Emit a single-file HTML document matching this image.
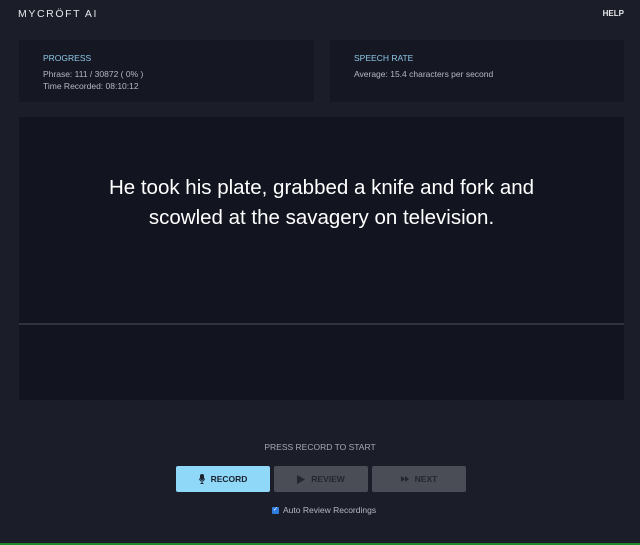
<!DOCTYPE html>
<html><head><meta charset="utf-8"><style>
html,body{margin:0;padding:0;width:640px;height:545px;overflow:hidden;background:#1b1e29;font-family:"Liberation Sans",sans-serif;position:relative}
.abs{position:absolute}
.logo{left:18px;top:8px;color:#e6e6ea;font-size:10.5px;letter-spacing:1.6px}
.help{right:16px;top:9px;color:#e6e6ea;font-size:8px;font-weight:bold}
.card{background:#151823;top:40px;height:62px}
.ttl{color:#8ec8e8;font-size:8.5px;position:absolute;left:24px;top:13px}
.ln{color:#b6b8c0;font-size:8.5px;position:absolute;left:24px}
.main{left:19px;top:117px;width:605px;height:283px;background:#121520}
.sep{left:19px;top:323px;width:605px;height:2px;background:#30323e}
.phrase{left:19px;width:605px;top:173px;text-align:center;color:#fff;font-size:20.5px;line-height:30px}
.press{left:0;width:640px;top:442px;text-align:center;color:#a6a8b0;font-size:8.5px}
.btn{top:466px;width:94px;height:26px;border-radius:2px;font-size:8.5px;font-weight:bold;display:flex;align-items:center;justify-content:center;gap:6px}
.rec{left:176px;background:#8fd8f8;color:#1b2230}
.gray{background:#4a4c56;color:#25272e}
.auto{left:272px;top:505px;color:#b6b8c0;font-size:8.5px;display:flex;align-items:center;gap:4px}
.cb{width:7px;height:7px;background:#2f7de0;border-radius:1px;color:#fff;font-size:6px;line-height:7px;text-align:center}
.green{left:0;top:543px;width:640px;height:2px;background:#1a8a2a}
</style></head><body>
<div class="abs logo">MYCR&#x00D6;FT AI</div>
<div class="abs help">HELP</div>
<div class="abs card" style="left:19px;width:295px">
<div class="ttl">PROGRESS</div>
<div class="ln" style="top:29px">Phrase: 111 / 30872 ( 0% )</div>
<div class="ln" style="top:41px">Time Recorded: 08:10:12</div>
</div>
<div class="abs card" style="left:330px;width:294px">
<div class="ttl">SPEECH RATE</div>
<div class="ln" style="top:29px">Average: 15.4 characters per second</div>
</div>
<div class="abs main"></div>
<div class="abs sep"></div>
<div class="abs phrase">He took his plate, grabbed a knife and fork and<br>scowled at the savagery on television.</div>
<div class="abs press">PRESS RECORD TO START</div>
<div class="abs btn rec"><svg width="6" height="10" viewBox="0 0 6 10"><rect x="1" y="0" width="4" height="6" rx="2" fill="#1b2230"/><path d="M0.5 4.5a2.5 2.5 0 0 0 5 0M3 7v2M1.5 9.5h3" stroke="#1b2230" fill="none"/></svg>RECORD</div>
<div class="abs btn gray" style="left:274px"><svg width="8" height="9"><path d="M0 0L8 4.5L0 9Z" fill="#25272e"/></svg>REVIEW</div>
<div class="abs btn gray" style="left:372px"><svg width="8" height="6"><path d="M0 0L4 3L0 6ZM4 0L8 3L4 6Z" fill="#25272e"/></svg>NEXT</div>
<div class="abs auto"><div class="cb">✓</div>Auto Review Recordings</div>
<div class="abs green"></div>
</body></html>
